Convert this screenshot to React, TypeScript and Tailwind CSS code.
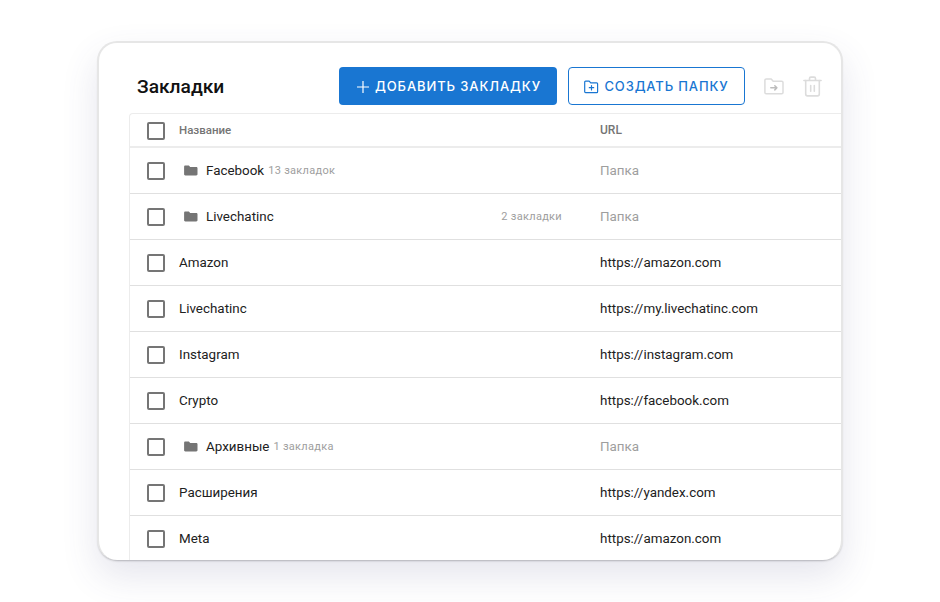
const rows = [
  { name: "Facebook", note: "13 закладок", url: "Папка", folder: true },
  { name: "Livechatinc", note: "2 закладки", url: "Папка", folder: true, noteRight: true },
  { name: "Amazon", url: "https://amazon.com" },
  { name: "Livechatinc", url: "https://my.livechatinc.com" },
  { name: "Instagram", url: "https://instagram.com" },
  { name: "Crypto", url: "https://facebook.com" },
  { name: "Архивные", note: "1 закладка", url: "Папка", folder: true },
  { name: "Расширения", url: "https://yandex.com" },
  { name: "Meta", url: "https://amazon.com" },
];

const Checkbox = () => (
  <div className="w-[18px] h-[18px] shrink-0 rounded-[2px] border-2 border-[#757575]" />
);

const FolderSolid = () => (
  <svg width="14" height="12" viewBox="0 0 14 12" fill="#757575">
    <path d="M1.3 1.500h3.600l1.300 1.400h6.100c.6 0 1.200.5 1.200 1.200v6.200c0 .7-.6 1.200-1.200 1.200H1.300C.6 11.500 .1 11 .1 10.300V2.700C.1 2 .6 1.500 1.300 1.500z" />
  </svg>
);

const FolderPlus = () => (
  <svg width="15" height="14" viewBox="0 0 15 14" fill="none" stroke="#1976d2" strokeWidth="1.200" strokeLinejoin="round" strokeLinecap="round">
    <path d="M1.600 1.200h3.600l1.500 1.700h6c.5 0 .9.400.9.900v7.900c0 .5-.4.900-.9.900H1.600c-.5 0-.9-.4-.9-.9V2.100c0-.5.4-.9.900-.9z" />
    <path d="M7.500 5.500v4.400M5.300 7.700h4.400" />
  </svg>
);

const FolderMove = () => (
  <svg width="20" height="17" viewBox="0 0 20 17" fill="none" stroke="#dcdcdc" strokeWidth="1.500" strokeLinejoin="round" strokeLinecap="round">
    <path d="M2.200 1h5l2 2.300h8.500c.7 0 1.300.6 1.300 1.300v9.900c0 .7-.6 1.300-1.300 1.300H2.200c-.7 0-1.300-.6-1.300-1.300V2.300C.9 1.600 1.500 1 2.200 1z" />
    <path d="M6.800 9.800h6M10.800 7.700l2.100 2.100-2.100 2.100" stroke="#bdbdbd" />
  </svg>
);

const Trash = () => (
  <svg width="19" height="21" viewBox="0 0 19 21" fill="none" stroke="#dcdcdc" strokeWidth="1.600" strokeLinecap="round" strokeLinejoin="round">
    <path d="M.9 4.500h17.200M6.500 4.300V2.400c0-.7.600-1.300 1.300-1.300h3.400c.7 0 1.300.6 1.300 1.300v1.900" />
    <path d="M2.700 4.600v13.500c0 1 .8 1.800 1.800 1.800h10c1 0 1.800-.8 1.800-1.800V4.600" />
    <path d="M7.700 9.500v5.800M11.300 9.500v5.800" />
  </svg>
);

const App = () => {
  return (
    <div className="w-[940px] h-[602px] bg-white overflow-hidden pt-[41px] pl-[97px] font-['Roboto',sans-serif]">
      <div className="w-[746px] h-[519px] bg-white rounded-[20px] border-2 border-[#e6e6e6] border-b-0 overflow-hidden shadow-[0_16px_36px_rgba(70,70,130,0.14),0_2px_2px_-1px_rgba(0,0,0,0.25)] pl-[30px]">
        <div className="h-[70px] flex items-center">
          <div className="w-[210px] pl-[8px] pt-[19px] text-[19.200px] font-medium text-[#111]">Закладки</div>
          <div className="flex items-center pt-[16px] font-['Inter',sans-serif]">
            <button className="w-[218px] h-[38px] pt-[1px] pl-[2px] rounded-[4px] bg-[#1976d2] text-white flex items-center justify-center gap-[6px] text-[13px] font-medium tracking-[0.900px]">
              <svg width="12" height="12" viewBox="0 0 12 12" stroke="#fff" strokeWidth="1.200"><path d="M6 0v12M0 6h12" /></svg>
              ДОБАВИТЬ ЗАКЛАДКУ
            </button>
            <button className="ml-[11px] w-[177px] h-[38px] pt-[1px] rounded-[4px] border border-[#1976d2] text-[#1976d2] flex items-center justify-center gap-[5px] text-[13px] font-medium tracking-[0.850px]">
              <FolderPlus />
              СОЗДАТЬ ПАПКУ
            </button>
            <div className="ml-[19px] flex items-center gap-[19px]">
              <FolderMove />
              <Trash />
            </div>
          </div>
        </div>
        <div className="border-l border-t border-[#ececec] rounded-tl-[4px]">
          <div className="h-[34px] pt-[1px] border-b-2 border-[#ececec] flex items-center pl-[17px] text-[11.500px] font-medium text-[#757575]">
            <Checkbox />
            <span className="ml-[14px] w-[421px]">Название</span>
            <span className="text-[12px] -mt-[1px]">URL</span>
          </div>
          {rows.map((r, i) => (
            <div key={i} className="h-[46px] border-b border-[#e0e0e0] flex items-center pl-[17px] text-[13.400px] text-[#212121]">
              <Checkbox />
              <div className="ml-[14px] w-[421px] flex items-center">
                {r.folder && <span className="ml-[5px] mr-[8px] flex"><FolderSolid /></span>}
                <span className="pt-[1px]">{r.name}</span>
                {r.note && (
                  <span className={r.noteRight ? "ml-auto mr-[38px] pt-[2px] text-[11px] text-[#9e9e9e] tracking-[0.3px]" : "ml-[4px] pt-[2px] text-[11px] text-[#9e9e9e] tracking-[0.3px]"}>{r.note}</span>
                )}
              </div>
              <span className={r.folder ? "pt-[1px] text-[#9e9e9e]" : "pt-[1px]"}>{r.url}</span>
            </div>
          ))}
        </div>
      </div>
    </div>
  );
};

export default App;
